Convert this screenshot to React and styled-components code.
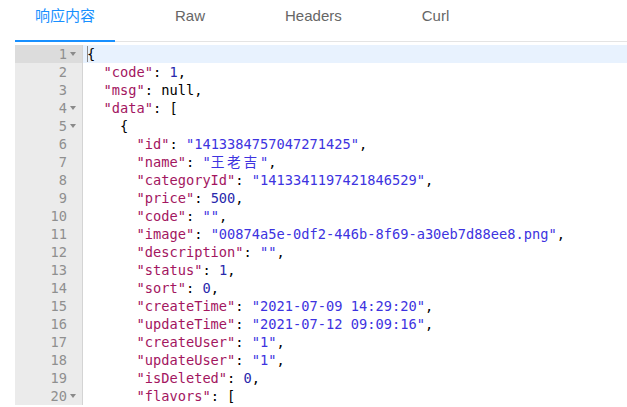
import React from 'react';
import styled, { createGlobalStyle } from 'styled-components';

const GlobalStyle = createGlobalStyle`
  html, body {
    margin: 0;
    padding: 0;
    background: #fff;
    overflow: hidden;
  }
`

// tabs
const Page = styled.div`
  padding-left: 15px;
  height: 407px;
  overflow: hidden;
  font-family: "Liberation Sans", "Noto Sans CJK SC", Arial, sans-serif;
`

const TabBar = styled.div`
  display: flex;
  gap: 40px;
  height: 41px;
  border-bottom: 1px solid #e4e4e4;
`

const Tab = styled.div`
  position: relative;
  padding: 0 20px;
  line-height: 32px;
  font-size: 15px;
  color: ${p => (p.$active ? '#1890ff' : '#666')};
  cursor: pointer;

  &::after {
    content: '';
    display: ${p => (p.$active ? 'block' : 'none')};
    position: absolute;
    left: 0;
    right: 0;
    bottom: -1px;
    height: 2px;
    background: #1890ff;
  }
`

// editor
const Editor = styled.div`
  margin-top: 3px;
  font-family: "DejaVu Sans Mono", "Noto Sans CJK SC", monospace;
  font-size: 13.7px;
  line-height: 18px;
`

const Row = styled.div`
  display: grid;
  grid-template-columns: 68px 1fr;
  height: 18px;
`

const Gutter = styled.div`
  display: flex;
  justify-content: flex-end;
  align-items: center;
  padding-right: 3px;
  background: ${p => (p.$active ? '#dcdcdc' : '#ebebeb')};
  border-right: 1px solid #d4d4d4;
  color: #8f8f8f;
`

const FoldSlot = styled.span`
  width: 12px;
  display: flex;
  justify-content: center;
  align-items: center;
`

const FoldArrow = styled.span`
  width: 0;
  height: 0;
  border-left: 3px solid transparent;
  border-right: 3px solid transparent;
  border-top: 4px solid #8a8a8a;
`

const Code = styled.div`
  position: relative;
  padding-left: 4px;
  white-space: pre;
  color: #000;
  background: ${p => (p.$active ? '#e8f2fe' : 'transparent')};
`

const Cursor = styled.span`
  position: absolute;
  left: 4px;
  top: 1px;
  width: 1px;
  height: 16px;
  background: #8a8a8a;
`

const tokenColors = {
  key: '#a3165f',
  str: '#3d33e0',
  num: '#2828ac',
  plain: '#000',
}

const Token = styled.span`
  color: ${p => tokenColors[p.$kind] || '#000'};
`

const Wide = styled.span`
  letter-spacing: 2.75px;
`

const k = t => ['key', t]
const s = t => ['str', t]
const n = t => ['num', t]
const p = t => ['plain', t]

const lines = [
  { fold: true, tokens: [p('{')] },
  { tokens: [p('  '), k('"code"'), p(': '), n('1'), p(',')] },
  { tokens: [p('  '), k('"msg"'), p(': null,')] },
  { fold: true, tokens: [p('  '), k('"data"'), p(': [')] },
  { fold: true, tokens: [p('    {')] },
  { tokens: [p('      '), k('"id"'), p(': '), s('"1413384757047271425"'), p(',')] },
  { tokens: [p('      '), k('"name"'), p(': '), ['cjk', '王老吉'], p(',')] },
  { tokens: [p('      '), k('"categoryId"'), p(': '), s('"1413341197421846529"'), p(',')] },
  { tokens: [p('      '), k('"price"'), p(': '), n('500'), p(',')] },
  { tokens: [p('      '), k('"code"'), p(': '), s('""'), p(',')] },
  { tokens: [p('      '), k('"image"'), p(': '), s('"00874a5e-0df2-446b-8f69-a30eb7d88ee8.png"'), p(',')] },
  { tokens: [p('      '), k('"description"'), p(': '), s('""'), p(',')] },
  { tokens: [p('      '), k('"status"'), p(': '), n('1'), p(',')] },
  { tokens: [p('      '), k('"sort"'), p(': '), n('0'), p(',')] },
  { tokens: [p('      '), k('"createTime"'), p(': '), s('"2021-07-09 14:29:20"'), p(',')] },
  { tokens: [p('      '), k('"updateTime"'), p(': '), s('"2021-07-12 09:09:16"'), p(',')] },
  { tokens: [p('      '), k('"createUser"'), p(': '), s('"1"'), p(',')] },
  { tokens: [p('      '), k('"updateUser"'), p(': '), s('"1"'), p(',')] },
  { tokens: [p('      '), k('"isDeleted"'), p(': '), n('0'), p(',')] },
  { fold: true, tokens: [p('      '), k('"flavors"'), p(': [')] },
]

const renderToken = ([kind, text], i) => {
  if (kind === 'cjk') {
    return (
      <Token key={i} $kind="str">"<Wide>{text}</Wide>"</Token>
    )
  }
  return <Token key={i} $kind={kind}>{text}</Token>
}

const tabs = ['响应内容', 'Raw', 'Headers', 'Curl']

const App = () => {
  return (
    <Page>
      <GlobalStyle />
      <TabBar>
        {tabs.map((t, i) => (
          <Tab key={t} $active={i === 0}>{t}</Tab>
        ))}
      </TabBar>
      <Editor>
        {lines.map((line, i) => (
          <Row key={i}>
            <Gutter $active={i === 0}>
              <span>{i + 1}</span>
              <FoldSlot>{line.fold && <FoldArrow />}</FoldSlot>
            </Gutter>
            <Code $active={i === 0}>
              {i === 0 && <Cursor />}
              {line.tokens.map(renderToken)}
            </Code>
          </Row>
        ))}
      </Editor>
    </Page>
  );
};

export default App;
